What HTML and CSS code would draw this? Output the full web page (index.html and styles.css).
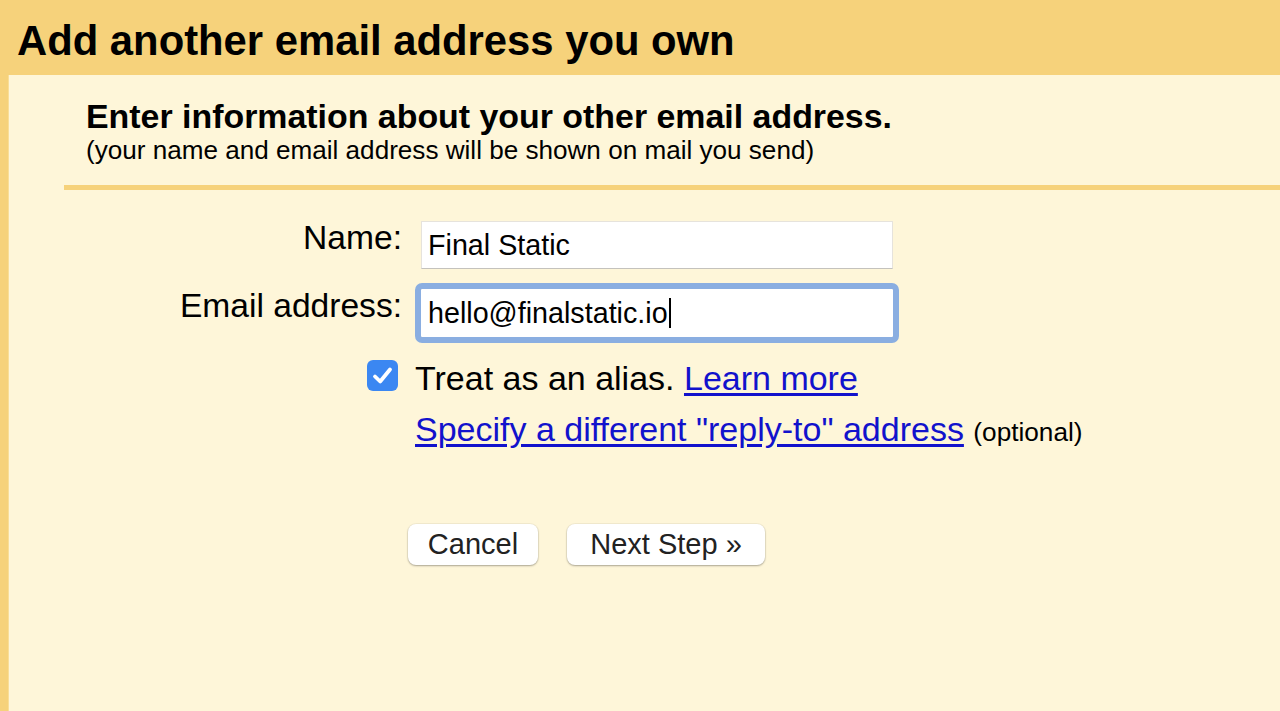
FILE: index.html
```html
<!DOCTYPE html>
<html lang="en">
<head>
<meta charset="utf-8">
<title>Add another email address you own</title>
<link rel="stylesheet" href="styles.css">
</head>
<body>
<header class="band">
  <h1 class="title">Add another email address you own</h1>
</header>
<main class="panel">
  <section class="intro">
    <h2 class="intro-head">Enter information about your other email address.</h2>
    <p class="intro-sub">(your name and email address will be shown on mail you send)</p>
  </section>
  <div class="sep"></div>
  <form class="form">
    <label class="label">Name:</label>
    <div class="field"><span class="val">Final Static</span></div>
    <label class="label">Email address:</label>
    <div class="field focused"><span class="val">hello@finalstatic.io</span><span class="caret"></span></div>
  </form>
  <div class="opt-row">
    <span class="check">
      <svg width="31" height="31" viewBox="0 0 31 31"><path d="M8 16.5 L13.2 21.5 L23 9.5" fill="none" stroke="#fff" stroke-width="3.8" stroke-linecap="round" stroke-linejoin="round"/></svg>
    </span>
    <span class="opt-text">Treat as an alias. <a class="link" href="#">Learn more</a></span>
  </div>
  <div class="reply-row">
    <a class="link" href="#">Specify a different "reply-to" address</a> <span class="optional">(optional)</span>
  </div>
  <div class="actions">
    <button class="btn btn-cancel" type="button">Cancel</button>
    <button class="btn btn-next" type="button">Next Step »</button>
  </div>
</main>
</body>
</html>
```
FILE: styles.css
```css
html, body {
  margin: 0;
  padding: 0;
}
body {
  background: #f6d27b;
  font-family: "Liberation Sans", Arial, sans-serif;
  color: #000;
  height: 711px;
  overflow: hidden;
  display: flex;
  flex-direction: column;
}
.band {
  height: 75px;
  box-sizing: border-box;
  padding: 20px 0 0 17px;
}
.title {
  margin: 0;
  font-size: 41.8px;
  line-height: 42px;
  font-weight: bold;
}
.panel {
  flex: 1;
  margin-left: 8px;
  background: #fef6d9;
  border-left: 1px solid #f9de98;
  padding-top: 24px;
}
.intro {
  padding-left: 77px;
}
.intro-head {
  margin: 0;
  font-size: 33.9px;
  line-height: 34px;
  font-weight: bold;
}
.intro-sub {
  margin: 4px 0 0;
  font-size: 26.1px;
  line-height: 26px;
}
.sep {
  margin: 22px 0 0 55px;
  height: 5px;
  background: #f6d27b;
}
.form {
  margin-top: 31px;
  display: grid;
  grid-template-columns: 393px 472px;
  grid-auto-rows: 48px;
  column-gap: 19px;
  row-gap: 20px;
}
.label {
  text-align: right;
  font-size: 33.6px;
  line-height: 33px;
  align-self: start;
}
.field {
  box-sizing: border-box;
  height: 48px;
  background: #fff;
  border: 1px solid #e6e3dc;
  border-bottom-color: #c4c2bd;
  padding: 0 6px;
  font-size: 28.7px;
  line-height: 46px;
  color: #000;
  display: flex;
  align-items: center;
}
.focused {
  border-color: #fff;
  border-radius: 1px;
  outline: 6px solid #8aaee1;
  outline-offset: 0;
}
.caret {
  display: inline-block;
  width: 2px;
  height: 30px;
  background: #000;
  margin-left: 1px;
}
.opt-row {
  margin: 23px 0 0 358px;
  display: flex;
  align-items: flex-start;
  column-gap: 17px;
}
.check {
  width: 31px;
  height: 31px;
  border-radius: 6px;
  background: #3b87f2;
  display: block;
}
.check svg {
  display: block;
}
.opt-text {
  font-size: 34px;
  line-height: 36px;
}
.link {
  color: #1212cc;
  text-decoration: underline;
  text-underline-offset: 3px;
}
.reply-row {
  margin: 15px 0 0 406px;
  font-size: 34px;
  line-height: 36px;
}
.optional {
  font-size: 26.2px;
}
.actions {
  margin: 74px 0 0 399px;
  display: flex;
  column-gap: 29px;
}
.btn {
  height: 41px;
  background: #fff;
  border: none;
  border-radius: 8px;
  box-shadow: 0 1px 2px rgba(0, 0, 0, 0.3), 0 0 0 1px rgba(0, 0, 0, 0.04);
  font-family: "Liberation Sans", Arial, sans-serif;
  font-size: 29px;
  color: #222;
  padding: 0;
  text-align: center;
}
.btn-cancel {
  width: 130px;
}
.btn-next {
  width: 198px;
}
```
